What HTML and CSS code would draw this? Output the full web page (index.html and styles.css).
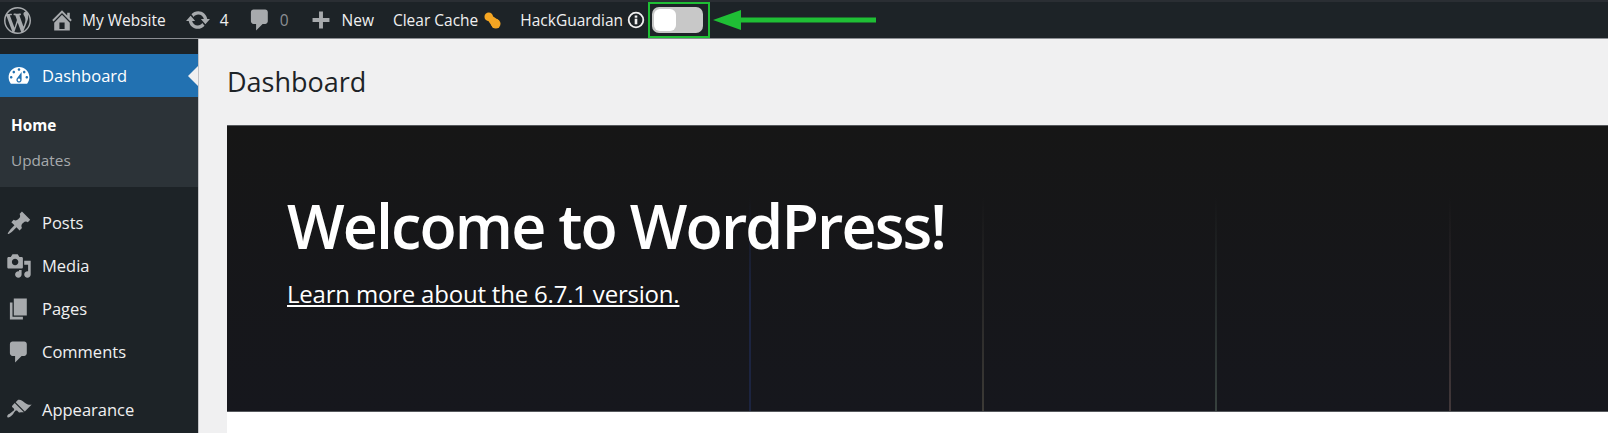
FILE: index.html
```html
<!DOCTYPE html>
<html lang="en">
<head>
  <meta charset="UTF-8" />
  <title>Dashboard</title>
  <link rel="stylesheet" href="styles.css">
</head>
<body>
  <header class="topbar">
    <a class="bar-item bar-logo"><svg class="icon-logo" viewBox="0 0 20 20"><path d="M20 10c0-5.51-4.49-10-10-10C4.48 0 0 4.49 0 10c0 5.52 4.48 10 10 10 5.51 0 10-4.48 10-10zM7.78 15.37L4.37 6.22c.55-.02 1.17-.08 1.17-.08.5-.06.44-1.13-.06-1.11 0 0-1.45.11-2.37.11-.18 0-.37 0-.58-.01C4.12 2.69 6.87 1.11 10 1.11c2.33 0 4.45.87 6.05 2.34-.68-.11-1.65.39-1.65 1.58 0 .74.45 1.36.9 2.1.35.61.55 1.36.55 2.46 0 1.49-1.4 5-1.4 5l-3.03-8.37c.54-.02.82-.17.82-.17.5-.05.44-1.25-.06-1.22 0 0-1.44.12-2.38.12-.87 0-2.33-.12-2.33-.12-.5-.03-.56 1.2-.06 1.22l.92.08 1.26 3.41zM17.41 10c.24-.64.74-1.87.43-4.25.7 1.29 1.05 2.71 1.05 4.25 0 3.29-1.73 6.24-4.4 7.78.97-2.59 1.94-5.2 2.92-7.78zM6.1 18.09C3.12 16.65 1.11 13.53 1.11 10c0-1.3.23-2.48.72-3.59C3.25 10.3 4.67 14.2 6.1 18.09zm4.03-6.63l2.58 6.98c-.86.29-1.76.45-2.71.45-.79 0-1.57-.11-2.29-.33.81-2.38 1.62-4.74 2.42-7.1z"/></svg></a>
    <a class="bar-item bar-site"><svg class="icon-bar" viewBox="0 0 20 20"><path d="M16 8.5l1.53 1.53-1.06 1.06L10 4.62l-6.47 6.47-1.06-1.06L10 2.5l4 4v-2h2v4zm-6-2.46l6 5.99V18H4v-5.97zM12 17v-5H8v5h4z"/></svg><span>My Website</span></a>
    <a class="bar-item bar-updates"><svg class="icon-bar" viewBox="0 0 20 20"><path d="M10.2 3.28c3.53 0 6.43 2.61 6.92 6h2.08l-3.5 4-3.5-4h2.32c-.45-1.97-2.21-3.45-4.32-3.45-1.45 0-2.73.71-3.54 1.78L4.95 5.66C6.23 4.2 8.11 3.28 10.2 3.28zm-.4 13.44c-3.52 0-6.43-2.61-6.92-6H.8l3.5-4c1.17 1.33 2.33 2.67 3.5 4H5.48c.45 1.97 2.21 3.45 4.32 3.45 1.45 0 2.73-.71 3.54-1.78l1.71 1.95c-1.28 1.46-3.15 2.38-5.25 2.38z"/></svg><span>4</span></a>
    <a class="bar-item bar-comments"><svg class="icon-bar" viewBox="0 0 20 20"><path d="M5 2h9c1.1 0 2 .9 2 2v7c0 1.1-.9 2-2 2h-2l-5 5v-5H5c-1.1 0-2-.9-2-2V4c0-1.1.9-2 2-2z"/></svg><span class="muted">0</span></a>
    <a class="bar-item bar-new"><svg class="icon-bar" viewBox="0 0 20 20"><path d="M16.500 8.500v3h-5v5h-3v-5h-5v-3h5v-5h3v5z"/></svg><span>New</span></a>
    <a class="bar-item bar-cache"><span>Clear Cache</span><svg class="icon-pill" viewBox="0 0 18 18"><circle cx="5" cy="5" r="4.500"/><circle cx="12.500" cy="12.500" r="5"/><path d="M5 1.500L16 9l-7 7L1.500 5z"/></svg></a>
    <a class="bar-item bar-guard"><span>HackGuardian</span><svg class="icon-info" viewBox="0 0 18 18"><circle cx="9" cy="9" r="7.300"/><rect class="info-mark" x="7.700" y="7.700" width="2.600" height="5.600"/><rect class="info-mark" x="7.700" y="4.500" width="2.600" height="2.200"/></svg></a>
    <div class="toggle-frame">
      <div class="toggle"><div class="toggle-knob"></div></div>
    </div>
    <svg class="arrow" width="163" height="28" viewBox="0 0 163 28"><path d="M0 14L28 4v7.500h135v5H28V24z"/></svg>
  </header>

  <div class="shell">
    <nav class="sidebar">
      <a class="menu-item current"><svg class="icon-menu" viewBox="0 0 20 20"><path d="M3.76 16h12.48c1.100-1.370 1.760-3.110 1.760-5 0-4.420-3.580-8-8-8s-8 3.580-8 8c0 1.890.66 3.630 1.760 5zM10 4c.55 0 1 .45 1 1s-.45 1-1 1-1-.45-1-1 .45-1 1-1zM6 6c.55 0 1 .45 1 1s-.45 1-1 1-1-.45-1-1 .45-1 1-1zm8 0c.55 0 1 .45 1 1s-.45 1-1 1-1-.45-1-1 .45-1 1-1zm-5.370 5.550L12 7v6c0 1.100-.9 2-2 2s-2-.9-2-2c0-.57.24-1.080.63-1.450zM4 10c.55 0 1 .45 1 1s-.45 1-1 1-1-.45-1-1 .45-1 1-1zm12 0c.55 0 1 .45 1 1s-.45 1-1 1-1-.45-1-1 .45-1 1-1zm-5 3c0-.55-.45-1-1-1s-1 .45-1 1 .45 1 1 1 1-.45 1-1z"/></svg><span>Dashboard</span></a>
      <div class="submenu">
        <a class="sub-item active">Home</a>
        <a class="sub-item">Updates</a>
      </div>
      <a class="menu-item"><svg class="icon-menu" viewBox="0 0 20 20"><path d="M10.440 3.020l1.820-1.820 6.360 6.350-1.830 1.820c-1.050-.68-2.480-.57-3.410.36l-.75.75c-.92.93-1.040 2.350-.35 3.410l-1.830 1.820-2.410-2.410-2.800 2.790c-.42.42-3.380 2.710-3.800 2.290s1.860-3.390 2.280-3.810l2.790-2.790L4.100 9.360l1.830-1.820c1.050.69 2.480.57 3.400-.36l.75-.75c.93-.92 1.050-2.350.36-3.410z"/></svg><span>Posts</span></a>
      <a class="menu-item"><svg class="icon-menu" viewBox="0 0 20 20"><path d="M13 11V4c0-.55-.45-1-1-1h-1.670L9 1H5L3.670 3H2c-.55 0-1 .45-1 1v7c0 .55.45 1 1 1h10c.55 0 1-.45 1-1zM7 4.500c1.380 0 2.500 1.120 2.500 2.500S8.380 9.500 7 9.500 4.500 8.380 4.500 7 5.620 4.500 7 4.500zM14 6h5v10.500c0 1.380-1.120 2.500-2.500 2.500S14 17.880 14 16.500s1.120-2.500 2.500-2.500c.17 0 .34.02.5.05V9h-3V6zm-4 8.050V13h2v3.500c0 1.380-1.120 2.500-2.500 2.500S7 17.880 7 16.500 8.120 14 9.500 14c.17 0 .34.02.5.05z"/></svg><span>Media</span></a>
      <a class="menu-item"><svg class="icon-menu" viewBox="0 0 20 20"><path d="M6 15V2h10v13H6zm-1 1h8v2H3V5h2v11z"/></svg><span>Pages</span></a>
      <a class="menu-item"><svg class="icon-menu" viewBox="0 0 20 20"><path d="M5 2h9c1.100 0 2 .9 2 2v7c0 1.100-.9 2-2 2h-2l-5 5v-5H5c-1.100 0-2-.9-2-2V4c0-1.100.9-2 2-2z"/></svg><span>Comments</span></a>
      <a class="menu-item menu-group"><svg class="icon-menu" viewBox="0 0 20 20"><path d="M14.480 11.060L7.410 3.990l1.500-1.500c.5-.56 2.300-.47 3.510.32 1.210.8 1.430 1.280 2.910 2.100 1.180.64 2.450 1.260 4.450.85zm-.71.71L6.700 4.700 4.930 6.470c-.39.39-.39 1.020 0 1.410l1.060 1.060c.39.39.39 1.030 0 1.420-.6.6-1.430 1.110-2.210 1.690-.35.26-.7.53-1.010.84C1.430 13.230.4 14.750 1.150 15.500c.75.75 2.270-.28 3.610-1.620.31-.31.58-.66.84-1.010.58-.78 1.090-1.610 1.690-2.210.39-.39 1.020-.39 1.410 0l1.060 1.060c.39.39 1.020.39 1.410 0z"/></svg><span>Appearance</span></a>
    </nav>

    <main class="main">
      <h1 class="page-title">Dashboard</h1>
      <section class="welcome">
        <h2 class="welcome-title">Welcome to WordPress!</h2>
        <a class="welcome-link">Learn more about the 6.7.1 version.</a>
      </section>
      <div class="below"></div>
    </main>
  </div>
</body>
</html>
```

FILE: styles.css
```css
* { margin: 0; padding: 0; box-sizing: border-box; }

html, body {
  height: 433px;
  overflow: hidden;
}

body {
  display: flex;
  flex-direction: column;
  background: #f0f0f1;
  font-family: "Open Sans", "Noto Sans", sans-serif;
  color: #f0f0f1;
}

/* top bar */
.topbar {
  height: 39px;
  flex: none;
  display: flex;
  align-items: center;
  background: #1d2327;
  border-top: 2px solid #2a2e33;
  border-bottom: 1px solid #8c8f94;
  font-size: 15.500px;
}

.bar-item {
  display: flex;
  align-items: center;
  color: #f0f0f1;
}

.bar-item svg { fill: #a7aaad; flex: none; }

.bar-logo { margin-left: 4px; }
.bar-site { margin-left: 18px; gap: 7px; }
.bar-updates { margin-left: 19px; gap: 9px; }
.bar-comments { margin-left: 18px; gap: 7px; }
.bar-new { margin-left: 19px; gap: 8px; }
.bar-cache { margin-left: 19px; gap: 6px; }
.bar-guard { margin-left: 19px; gap: 4px; }

.icon-logo { width: 27px; height: 27px; }
.icon-bar { width: 26px; height: 26px; }
.muted { color: #8c8f94; }

.bar-item .icon-pill { width: 17px; height: 17px; fill: #f5a623; }
.bar-item .icon-info { width: 18px; height: 18px; fill: none; }
.icon-info circle { stroke: #f0f0f1; stroke-width: 1.8; }
.bar-item .icon-info .info-mark { fill: #f0f0f1; }

.toggle-frame {
  margin-left: 3px;
  width: 62px;
  height: 36px;
  border: 2px solid #1fbf35;
  padding-left: 2px;
  display: flex;
  align-items: center;
}

.toggle {
  width: 51px;
  height: 26px;
  background: #c8c8c8;
  border-radius: 7px;
  padding: 2px;
}

.toggle-knob {
  width: 22px;
  height: 22px;
  background: #fff;
  border-radius: 6px;
}

.arrow {
  margin-left: 3px;
  fill: #1fbf35;
}

/* sidebar */
.shell {
  flex: 1;
  display: flex;
  min-height: 0;
}

.sidebar {
  width: 199px;
  flex: none;
  background: #1d2327;
  border-right: 1px solid #c3c4c7;
  padding-top: 15px;
  font-size: 16.500px;
}

.menu-item {
  height: 43px;
  display: flex;
  align-items: center;
  padding-left: 6px;
  gap: 10px;
  color: #f0f0f1;
  position: relative;
}

.icon-menu {
  width: 26px;
  height: 26px;
  flex: none;
  fill: #a7aaad;
}

.menu-group { margin-top: 15px; }

.menu-item.current {
  background: #2271b1;
  color: #fff;
}

.menu-item.current .icon-menu { fill: #fff; }

/* notch pointing at the content */
.menu-item.current::after {
  content: "";
  position: absolute;
  right: 0;
  top: 50%;
  margin-top: -10px;
  border: 10px solid transparent;
  border-right-color: #f0f0f1;
}

.submenu {
  height: 90px;
  background: #2c3338;
  padding-top: 10px;
  margin-bottom: 14px;
  font-size: 15.300px;
}

.sub-item {
  display: block;
  height: 35px;
  line-height: 36px;
  padding-left: 11px;
  color: #a7aaad;
}

.sub-item.active {
  color: #fff;
  font-weight: 700;
}

/* main content */
.main {
  flex: 1;
  min-width: 0;
  display: flex;
  flex-direction: column;
}

.page-title {
  height: 86px;
  padding: 27px 0 0 28px;
  font-size: 27px;
  line-height: 32px;
  font-weight: 400;
  color: #1d2327;
}

.welcome {
  height: 287px;
  margin-left: 28px;
  padding: 64px 0 0 60px;
  color: #fff;
  border-top: 1px solid #55585c;
  border-bottom: 1px solid #55585c;
  background-color: #161719;
  background-image:
    linear-gradient(to bottom, transparent 25%, #1c2440 60%),
    linear-gradient(to bottom, transparent 25%, #3c3a36),
    linear-gradient(to bottom, transparent 25%, #37413e),
    linear-gradient(to bottom, transparent 25%, #42383a),
    linear-gradient(to bottom, #161616, #16171d);
  background-size: 2px 100%, 2px 100%, 2px 100%, 2px 100%, 100% 100%;
  background-position: 522px 0, 755px 0, 988px 0, 1222px 0, 0 0;
  background-repeat: no-repeat;
}

.welcome-title {
  font-size: 61px;
  line-height: 72px;
  font-weight: 600;
  letter-spacing: -1.900px;
}

.welcome-link {
  display: inline-block;
  margin-top: 15px;
  font-size: 24px;
  line-height: 34px;
  text-decoration: underline;
  letter-spacing: -0.200px;
}

.below {
  margin-left: 28px;
  flex: 1;
  background: #fff;
}
```
